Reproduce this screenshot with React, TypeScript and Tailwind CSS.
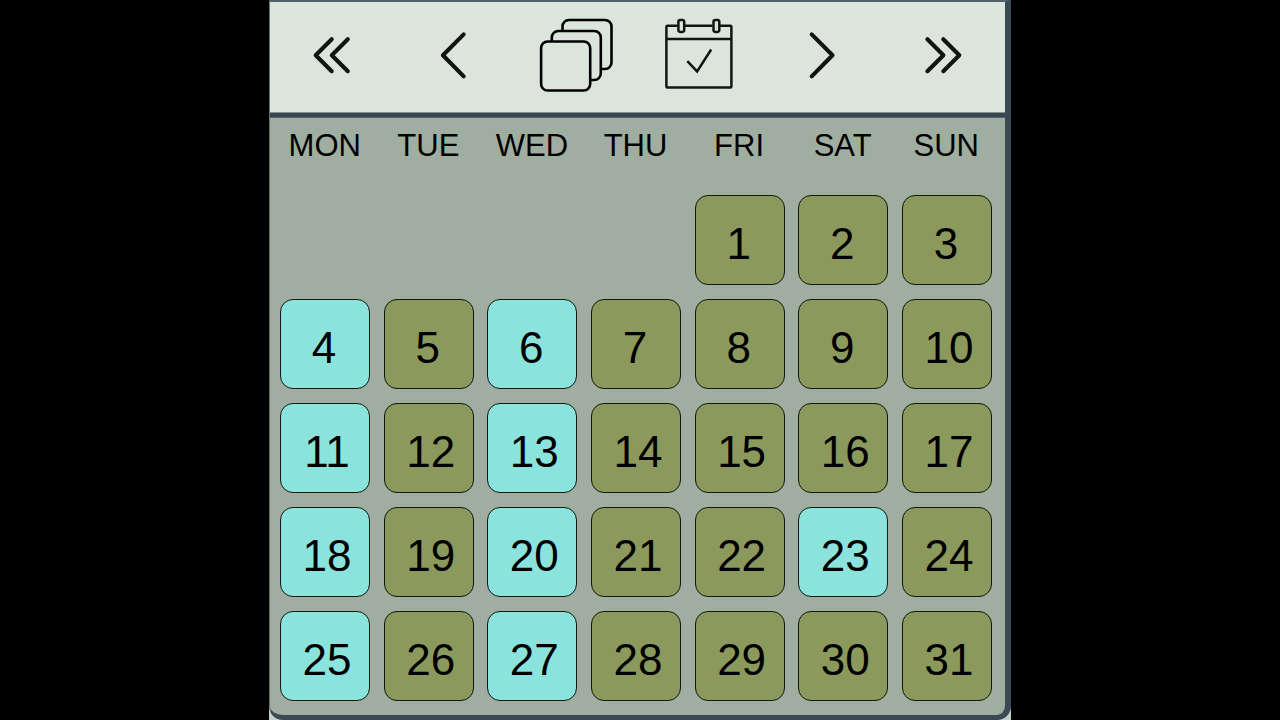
import type { ReactNode } from "react";

const weekdays = ["MON", "TUE", "WED", "THU", "FRI", "SAT", "SUN"];
const marked = new Set([4, 6, 11, 13, 18, 20, 23, 25, 27]);
const leadingBlanks = 4;
const days = Array.from({ length: 31 }, (_, i) => i + 1);

function NavButton({ label, className, children }: { label: string; className: string; children: ReactNode }) {
  return (
    <button type="button" aria-label={label} className={`h-[110px] shrink-0 ${className}`}>
      {children}
    </button>
  );
}

function Chevrons({ d, className }: { d: string; className: string }) {
  return (
    <svg className={className} fill="none" stroke="#111411" strokeWidth="4.1" strokeLinecap="round" strokeLinejoin="round">
      <path d={d} />
    </svg>
  );
}

function Toolbar() {
  return (
    <header className="flex h-[110px] bg-[#dce5dc] pl-[41px]">
      <NavButton label="Previous year" className="w-[126px]">
        <Chevrons className="h-[110px] w-[60px]" d="M20.7 37.2 4.7 53.2l16 16M36.8 37.2l-16 16 16 16" />
      </NavButton>
      <NavButton label="Previous month" className="w-[100px]">
        <Chevrons className="h-[110px] w-[60px]" d="M26.7 32.4 5.9 53.2l20.8 21.2" />
      </NavButton>
      <NavButton label="All months" className="w-[123px]">
        <svg className="h-[110px] w-[90px]" fill="none" stroke="#000" strokeWidth="2.6">
          <path d="M25.5 28.5V24.5a6.5 6.5 0 0 1 6.5-6.5h36a6.5 6.5 0 0 1 6.5 6.5v36a6.5 6.5 0 0 1-6.5 6.5h-4.5" />
          <path d="M14.8 39.5V35.5a6.5 6.5 0 0 1 6.5-6.5h36a6.5 6.5 0 0 1 6.5 6.5v36a6.5 6.5 0 0 1-6.5 6.5h-4.2" />
          <rect x="4.1" y="39.5" width="49.1" height="49" rx="6.5" />
        </svg>
      </NavButton>
      <NavButton label="Today" className="w-[146px]">
        <svg className="h-[110px] w-[90px]" fill="none" stroke="#111613" strokeWidth="2.5" strokeLinejoin="round">
          <path d="M17.5 23.8H7.4a1 1 0 0 0-1 1V84.4a1 1 0 0 0 1 1H70.4a1 1 0 0 0 1-1V24.8a1 1 0 0 0-1-1H59.4M24.5 23.8h28M6.5 37H71" />
          <rect x="18.4" y="17.9" width="5.8" height="12" rx="1.8" />
          <rect x="53.5" y="17.9" width="5.8" height="12" rx="1.8" />
          <path d="m27.3 59.2 9.8 10.2 14.1-21.9" strokeLinejoin="miter" />
        </svg>
      </NavButton>
      <NavButton label="Next month" className="w-[116px]">
        <Chevrons className="h-[110px] w-[60px]" d="m5.7 32.4 20.8 20.8L5.7 74.4" />
      </NavButton>
      <NavButton label="Next year" className="w-[60px]">
        <Chevrons className="h-[110px] w-[60px]" d="m5.4 37.2 16 16-16 16M21.3 37.2l16 16-16 16" />
      </NavButton>
    </header>
  );
}

function Day({ day }: { day: number }) {
  const color = marked.has(day) ? "bg-[#8ae4dd]" : "bg-[#8b9a5c]";
  const nudge = day < 10 ? "pr-[2px]" : "pl-[4px]";
  return (
    <button
      type="button"
      className={`flex h-[90px] w-[90px] items-center justify-center rounded-[13px] border border-[#10180f] pt-[8px] text-[44px] leading-none ${color} ${nudge}`}
    >
      {day}
    </button>
  );
}

export default function App() {
  return (
    <div className="flex h-[720px] w-[1280px] justify-center overflow-hidden bg-black font-['Liberation_Sans',Arial,sans-serif] text-black">
      <main className="h-[720px] w-[742px] bg-[#c5d0ca]">
        <div className="h-[720px] overflow-hidden rounded-b-[14px] border-t-2 border-r-[6px] border-b-[5px] border-l border-[#3b4955] border-t-[#52616a] border-l-[#66716f] bg-[#9faea0]">
          <Toolbar />
          <div className="h-[6px] border-t border-b border-t-[#82918f] border-b-[#53636a] bg-[#374650]" />
          <div className="grid h-[77px] w-[728px] grid-cols-7 pt-[10px] pl-[3px] text-center text-[31px] leading-[36px]">
            {weekdays.map((name) => (
              <span key={name}>{name}</span>
            ))}
          </div>
          <div className="ml-[10px] grid w-[712px] grid-cols-[repeat(7,90px)] justify-between gap-y-[14px]">
            {Array.from({ length: leadingBlanks }, (_, i) => (
              <span key={`blank-${i}`} />
            ))}
            {days.map((day) => (
              <Day key={day} day={day} />
            ))}
          </div>
        </div>
      </main>
    </div>
  );
}
